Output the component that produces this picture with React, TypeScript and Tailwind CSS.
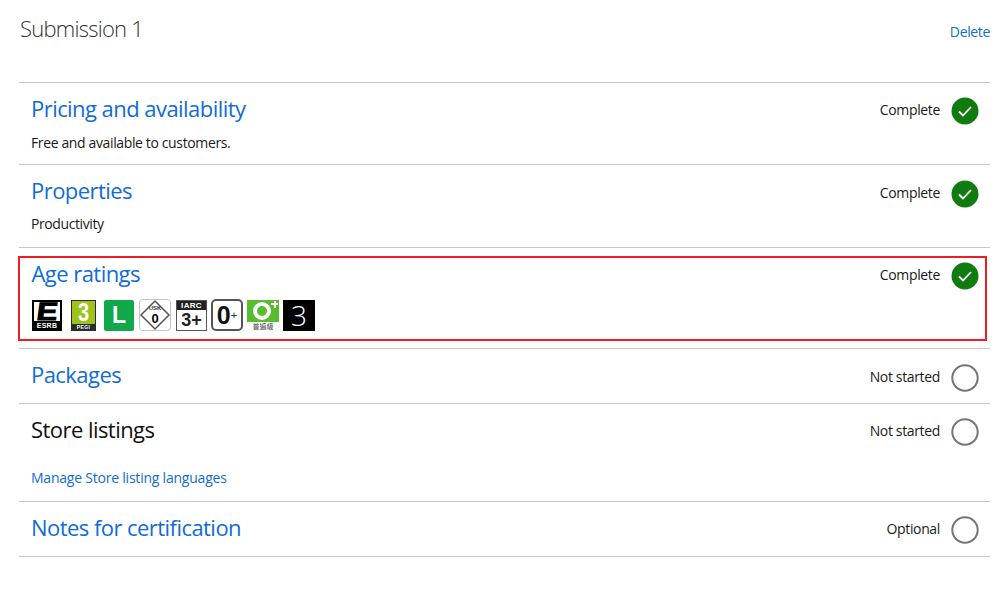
import React from "react";

const font = { fontFamily: '"Open Sans", "Noto Sans", sans-serif' };
const arial = "font-['Liberation_Sans',sans-serif]";

const Status: React.FC<{ label: string; done?: boolean; className?: string }> = ({ label, done, className = "" }) => {
    return (
        <div className={`flex items-center h-[28px] ${className}`}>
            <span className="text-[14px] leading-[20px] tracking-[-0.35px] text-[#1a1a1a] mr-[11px] -mt-[2px]">
                {label}
            </span>
            {done ? (
                <svg width="28" height="28" viewBox="0 0 28 28">
                    <circle cx="14" cy="14" r="13.5" fill="#107c10" />
                    <path d="M8 14.5l4 4 8-8.5" fill="none" stroke="#fff" strokeWidth="1.8" />
                </svg>
            ) : (
                <svg width="28" height="28" viewBox="0 0 28 28">
                    <circle cx="14" cy="14" r="12.7" fill="#fff" stroke="#767676" strokeWidth="2" />
                </svg>
            )}
        </div>
    );
};

const Esrb = () => (
    <div className={`w-[30px] h-[31px] bg-black flex flex-col items-center p-[2px] ${arial}`}>
        <div className="w-[26px] h-[19px] bg-white flex items-center justify-center">
            <span className="text-[25px] leading-[19px] font-bold text-black -skew-x-6 scale-x-125 [-webkit-text-stroke:1px_black]">E</span>
        </div>
        <span className="text-[7px] leading-[8px] mt-[1px] font-bold text-white tracking-[0.3px]">ESRB</span>
    </div>
);

const Pegi = () => (
    <div className={`w-[25px] h-[31px] bg-[#2b2b2b] flex flex-col items-center p-[1px] ${arial}`}>
        <div className="w-[23px] h-[23px] bg-[#9fc31c] flex items-center justify-center">
            <span className="text-[20px] leading-[23px] font-bold text-white scale-y-125">3</span>
        </div>
        <span className="text-[5px] leading-[6px] font-bold text-white tracking-[0.4px]">PEGI</span>
    </div>
);

const Cero = () => (
    <div className={`w-[30px] h-[31px] rounded-[2px] bg-[#10a84a] flex items-center justify-center ${arial}`}>
        <span className="text-[23px] leading-none font-bold text-white">L</span>
    </div>
);

const Usk = () => (
    <div className={`relative w-[32px] h-[32px] ${arial}`}>
        <svg width="32" height="32" viewBox="0 0 32 32" className="absolute inset-0">
            <rect x="0.5" y="0.5" width="31" height="31" rx="3" fill="#fff" stroke="#c4c4c4" />
            <path d="M16 2L30 16 16 30 2 16z" fill="#fff" stroke="#555" strokeWidth="1.5" />
        </svg>
        <div className="absolute inset-0 flex flex-col items-center justify-center">
            <span className="text-[6px] leading-[7px] font-bold text-[#333]">USK</span>
            <span className="text-[13px] leading-[14px] font-bold text-black">0</span>
        </div>
    </div>
);

const Iarc = () => (
    <div className={`w-[31px] h-[31px] border border-[#555] flex flex-col items-center bg-white ${arial}`}>
        <div className="w-full h-[9px] bg-[#222] flex items-center justify-center">
            <span className="text-[8px] leading-[9px] font-bold text-white tracking-[0.3px]">IARC</span>
        </div>
        <span className="text-[18px] leading-[20px] font-bold text-[#222]">3+</span>
    </div>
);

const ZeroPlus = () => (
    <div className={`w-[32px] h-[32px] rounded-[5px] border-2 border-[#555] flex items-center justify-center bg-white ${arial}`}>
        <span className="text-[25px] leading-none font-bold text-[#111]">0</span>
        <span className="text-[11px] leading-none text-[#333]">+</span>
    </div>
);

const Taiwan = () => (
    <div className="w-[32px] h-[31px] bg-white flex flex-col">
        <div className="relative h-[22px] bg-[#57bd2e] flex items-center justify-center">
            <div className="w-[18px] h-[18px] -ml-[2px] rounded-full border-[4px] border-white" />
            <div className="absolute right-[1px] top-[3.5px] w-[7px] h-[2px] bg-white" />
            <div className="absolute right-[3.5px] top-[1px] w-[2px] h-[7px] bg-white" />
        </div>
        <span className="text-[7px] leading-[9px] text-center text-[#444] font-['Noto_Sans_CJK_TC',sans-serif]">普遍級</span>
    </div>
);

const Russia = () => (
    <div className="w-[32px] h-[31px] bg-black flex items-center justify-center">
        <span className="text-[28px] leading-none font-light text-white">3</span>
    </div>
);

const Rating = () => (
    <div className="flex items-center gap-[4px] mt-[9px] ml-[0.5px] h-[32px]">
        <Esrb />
        <div className="ml-[5px]"><Pegi /></div>
        <div className="ml-[4px]"><Cero /></div>
        <div className="ml-[1px]"><Usk /></div>
        <div className="ml-[1px]"><Iarc /></div>
        <ZeroPlus />
        <Taiwan />
        <Russia />
    </div>
);

const Title: React.FC<{ text: string; black?: boolean; className?: string }> = ({ text, black, className = "" }) => (
    <a className={`block text-[22px] leading-[30px] tracking-[-0.55px] ${black ? "text-[#111]" : "text-[#0f6cd6]"} ${className}`}>
        {text}
    </a>
);

export default function App() {
    return (
        <div className="w-[999px] h-[612px] bg-white pl-[19px] pr-[9px]" style={font}>
            <div className="flex justify-between h-[82px] pt-[13px]">
                <h1 className="ml-[1px] text-[22px] leading-[30px] font-light tracking-[-0.75px] text-[#333]">Submission 1</h1>
                <a className="text-[14px] leading-[20px] tracking-[-0.35px] text-[#0f6cd6] mt-[9px]">Delete</a>
            </div>

            <div className="border-t-[1.5px] border-[#c8c8c8] h-[82px] pl-[12px] pr-[11px] pt-[12px]">
                <div className="flex justify-between h-[32px]">
                    <Title text="Pricing and availability" className="-mt-[2px]" />
                    <Status label="Complete" done className="mt-[2px]" />
                </div>
                <p className="text-[14px] leading-[20px] tracking-[-0.37px] text-[#1a1a1a] mt-[6px]">Free and available to customers.</p>
            </div>

            <div className="border-t-[1.5px] border-[#c8c8c8] h-[83px] pl-[12px] pr-[11px] pt-[13px]">
                <div className="flex justify-between h-[32px]">
                    <Title text="Properties" className="-mt-[3px]" />
                    <Status label="Complete" done className="mt-[2px]" />
                </div>
                <p className="text-[14px] leading-[20px] tracking-[-0.4px] text-[#1a1a1a] mt-[4px]">Productivity</p>
            </div>

            <div className="border-t-[1.5px] border-[#c8c8c8] h-[101px] pt-[8px]">
                <div className="border-2 border-[#ee1c25] h-[85px] w-[969px] -ml-[1px] pl-[11.5px] pr-[6px] pt-[5px]">
                    <div className="flex justify-between h-[27px]">
                        <Title text="Age ratings" className="-mt-[5px]" />
                        <Status label="Complete" done className="-mt-[1px]" />
                    </div>
                    <Rating />
                </div>
            </div>

            <div className="border-t-[1.5px] border-[#c8c8c8] h-[55px] pl-[12px] pr-[11px] pt-[13px]">
                <div className="flex justify-between">
                    <Title text="Packages" className="-mt-[3px]" />
                    <Status label="Not started" className="mt-[2px]" />
                </div>
            </div>

            <div className="border-t-[1.5px] border-[#c8c8c8] h-[98px] pl-[12px] pr-[11px] pt-[12px]">
                <div className="flex justify-between h-[32px]">
                    <Title text="Store listings" black className="-mt-[2px]" />
                    <Status label="Not started" className="mt-[2px]" />
                </div>
                <a className="block text-[14px] leading-[20px] tracking-[-0.22px] text-[#0f6cd6] mt-[20px]">Manage Store listing languages</a>
            </div>

            <div className="border-t-[1.5px] border-b-[1.5px] border-[#c8c8c8] h-[56px] pl-[12px] pr-[11px] pt-[12px]">
                <div className="flex justify-between">
                    <Title text="Notes for certification" className="-mt-[2px]" />
                    <Status label="Optional" className="mt-[2px]" />
                </div>
            </div>
        </div>
    );
}
